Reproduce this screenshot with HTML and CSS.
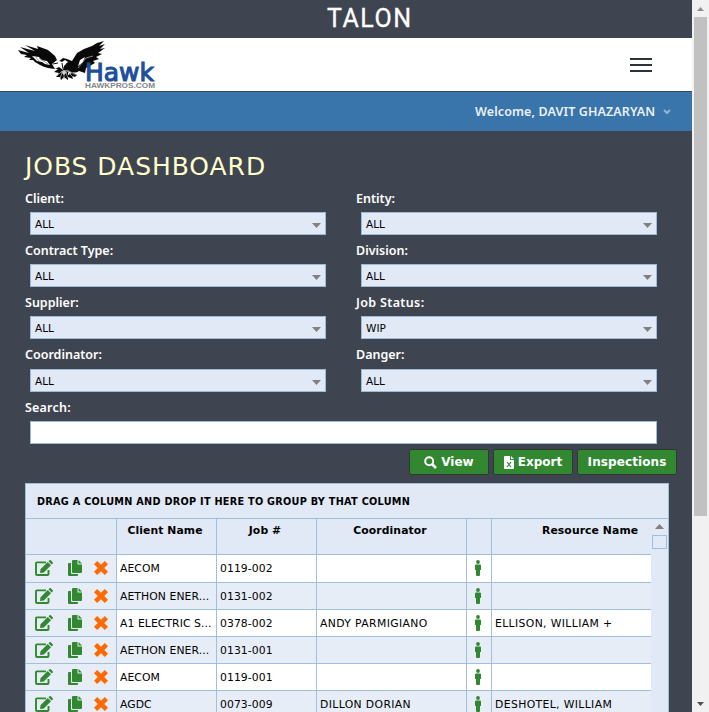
FILE: index.html
```html
<!DOCTYPE html>
<html lang="en">
<head>
<meta charset="utf-8">
<title>Talon - Jobs Dashboard</title>
<link rel="stylesheet" href="styles.css">
</head>
<body>
<svg class="defs" aria-hidden="true">
  <symbol id="edit" viewBox="0 0 18 16"><path d="M11 2.400H2Q1 2.400 1 3.400V14Q1 15 2 15H12.500Q13.500 15 13.500 14V10" fill="none" stroke="#318831" stroke-width="1.900"/><path d="M5.500 9.200 12.700 2 16 5.300 8.800 12.500 5 13ZM13.500 1.300 14.500.3Q15.200-.2 15.800.3L17.700 2.200Q18.200 2.800 17.700 3.500L16.700 4.500Z" fill="#318831"/></symbol>
  <symbol id="copy" viewBox="0 0 14 16"><path d="M4 1Q4 0 5 0H9.500V4.500H14V12Q14 13 13 13H5Q4 13 4 12ZM10.500 0 14 3.500H10.500ZM0 4Q0 3 1 3H3V13Q3 14 4 14H10V15Q10 16 9 16H1Q0 16 0 15Z" fill="#318831"/></symbol>
  <symbol id="remove" viewBox="0 0 14 14"><path d="M3.200 0 7 3.800 10.800 0 14 3.200 10.200 7 14 10.800 10.800 14 7 10.200 3.200 14 0 10.800 3.800 7 0 3.200Z" fill="#ff6a00"/></symbol>
  <symbol id="person" viewBox="0 0 6 16"><circle cx="3" cy="2" r="1.900" fill="#318831"/><path d="M1 4.500H5Q6 4.500 6 5.500V10H5V15Q5 16 4 16H2Q1 16 1 15V10H0V5.500Q0 4.500 1 4.500Z" fill="#318831"/></symbol>
</svg>
<div class="page">
  <header class="brand"><svg width="84" height="24"><text x="0" y="18" textLength="84">TALON</text></svg></header>
  <div class="masthead">
    <svg class="logo" width="140" height="50" viewBox="0 0 140 50">
      <path d="M0 10 11 13 2 7 17 11 7 5 20 9 19 6 30 10 37 16 40 22 45 18 49 19 54 21 59 13 66 9 74 6 79 3 86 1 81 6 87 4 82 9 87 8 80 13 84 14 78 17 81 19 75 21 77 23 68 28 67 33 61 31Q57 34 52 31L59 35 57 37 54 36 55 39 50 37 50 40 46 37 43 40 42 37 38 37 41 33 36 32 40 29Q29 29 22 25L17 22 15 20 11 20 13 18 6 17 9 15 3 14Z" fill="#090909"/>
      <path d="M34 24 39 20 44 22 47 20 50 22 46 26 45 30 41 27 37 29ZM14 16 21 17 23 20 29 21 32 25 27 24 24 22 19 21ZM62 20 67 17 65 22 60 26ZM43 32 46 30 49 32 46 35ZM50 31 54 33 50 35Z" fill="#fff"/>
      <path d="m39 36 5-5M42 38l3-7M46 39v-9M50 38l-3-8M55 37l-7-7M58 35l-9-5M60 28l8-10 7-2M21 18l9 6M17 16l4 5" fill="none" stroke="#999" stroke-width=".9"/>
      <path d="m35 24 5-1M44 23l1 6M49 23l-2 6" fill="none" stroke="#111"/>
      <text class="hawk" x="67" y="40.500" textLength="69" lengthAdjust="spacingAndGlyphs">Hawk</text>
      <text class="site" x="67" y="47.800" textLength="70" lengthAdjust="spacingAndGlyphs">HAWKPROS.COM</text>
    </svg>
    <div class="menu"><i></i><i></i><i></i></div>
  </div>
  <div class="welcome"><span>Welcome, DAVIT GHAZARYAN</span><svg width="8" height="6"><path d="m1 1 3 3 3-3" fill="none" stroke="#90b6d5" stroke-width="2"/></svg></div>
  <main>
    <h1>JOBS DASHBOARD</h1>
    <div class="filters">
      <div class="field"><label>Client:</label><div class="select">ALL</div></div>
      <div class="field"><label>Entity:</label><div class="select">ALL</div></div>
      <div class="field"><label>Contract Type:</label><div class="select">ALL</div></div>
      <div class="field"><label>Division:</label><div class="select">ALL</div></div>
      <div class="field"><label>Supplier:</label><div class="select">ALL</div></div>
      <div class="field"><label class="js">Job Status:</label><div class="select">WIP</div></div>
      <div class="field tall"><label>Coordinator:</label><div class="select">ALL</div></div>
      <div class="field tall"><label>Danger:</label><div class="select">ALL</div></div>
      <div class="field search"><label>Search:</label><div class="input"></div></div>
    </div>
    <div class="actions">
      <div class="btn view"><svg width="13" height="13"><circle cx="5.200" cy="5.200" r="4" fill="none" stroke="#fff" stroke-width="2"/><path d="m8 8 4 4" stroke="#fff" stroke-width="2.500"/></svg><span>View</span></div>
      <div class="btn export"><svg width="10" height="13"><path d="M1 0H6V4H10V12Q10 13 9 13H1Q0 13 0 12V1Q0 0 1 0ZM7 0 10 3H7Z" fill="#fff"/><path d="m3 6 4 5M7 6l-4 5" stroke="#318831" stroke-width="1.200"/></svg><span>Export</span></div>
      <div class="btn inspect"><span>Inspections</span></div>
    </div>
    <section class="grid">
      <div class="group"><span>DRAG A COLUMN AND DROP IT HERE TO GROUP BY THAT COLUMN</span></div>
      <div class="body">
        <div class="table">
          <div class="row head"><div></div><div class="cn">Client Name</div><div class="jn">Job #</div><div class="co">Coordinator</div><div></div><div class="res">Resource Name</div></div>
          <div class="row first"><div class="icons"><svg class="e"><use href="#edit"/></svg><svg class="c"><use href="#copy"/></svg><svg class="x"><use href="#remove"/></svg></div><div>AECOM</div><div>0119-002</div><div></div><div class="who"><svg><use href="#person"/></svg></div><div></div></div>
          <div class="row alt"><div class="icons"><svg class="e"><use href="#edit"/></svg><svg class="c"><use href="#copy"/></svg><svg class="x"><use href="#remove"/></svg></div><div>AETHON ENER...</div><div>0131-002</div><div></div><div class="who"><svg><use href="#person"/></svg></div><div></div></div>
          <div class="row"><div class="icons"><svg class="e"><use href="#edit"/></svg><svg class="c"><use href="#copy"/></svg><svg class="x"><use href="#remove"/></svg></div><div>A1 ELECTRIC S...</div><div>0378-002</div><div class="name">ANDY PARMIGIANO</div><div class="who"><svg><use href="#person"/></svg></div><div class="name">ELLISON, WILLIAM +</div></div>
          <div class="row alt"><div class="icons"><svg class="e"><use href="#edit"/></svg><svg class="c"><use href="#copy"/></svg><svg class="x"><use href="#remove"/></svg></div><div>AETHON ENER...</div><div>0131-001</div><div></div><div class="who"><svg><use href="#person"/></svg></div><div></div></div>
          <div class="row"><div class="icons"><svg class="e"><use href="#edit"/></svg><svg class="c"><use href="#copy"/></svg><svg class="x"><use href="#remove"/></svg></div><div>AECOM</div><div>0119-001</div><div></div><div class="who"><svg><use href="#person"/></svg></div><div></div></div>
          <div class="row alt"><div class="icons"><svg class="e"><use href="#edit"/></svg><svg class="c"><use href="#copy"/></svg><svg class="x"><use href="#remove"/></svg></div><div>AGDC</div><div>0073-009</div><div class="name">DILLON DORIAN</div><div class="who"><svg><use href="#person"/></svg></div><div class="name">DESHOTEL, WILLIAM</div></div>
        </div>
        <div class="gridbar"><svg width="9" height="5"><path d="M0 5 4.500 0 9 5Z" fill="#808080"/></svg><i></i></div>
      </div>
    </section>
  </main>
</div>
<aside class="scrollbar"><svg width="7" height="4"><path d="M0 4 3.500 0 7 4Z" fill="#8f8f8f"/></svg><i></i><svg width="7" height="4"><path d="M0 0H7L3.500 4Z" fill="#505050"/></svg></aside>
</body>
</html>
```

FILE: styles.css
```css
* { box-sizing: border-box; }
body { margin: 0; width: 709px; height: 712px; overflow: hidden; display: flex; background: #3f4550; font-family: "DejaVu Sans", Verdana, sans-serif; font-size: 11px; color: #000; }
svg { display: block; flex: none; overflow: visible; }
.defs { position: absolute; width: 0; height: 0; }
.page { width: 692px; height: 712px; overflow: hidden; }
.brand { height: 38px; padding: 9px 0 0 327px; }
.brand text { font: 400 25px Roboto, sans-serif; fill: #fff; stroke: #fff; stroke-width: .3px; }
.masthead { height: 53px; background: #fff; display: flex; justify-content: space-between; padding: 2px 40px 0 18px; }
.hawk { font: 400 25px "DejaVu Sans", sans-serif; fill: #1d4f9c; stroke: #1d4f9c; stroke-width: 1.1px; }
.site { font: bold 8px "Liberation Sans", sans-serif; fill: #858585; }
.menu { width: 22px; padding-top: 18px; display: grid; grid-auto-rows: 2px; gap: 4px; }
.menu i { background: #29323d; }
.welcome { height: 40px; border-top: 1px solid #3b4758; background: #3974aa; display: flex; align-items: center; padding-left: 475px; gap: 8px; color: #e9f1f8; font: 600 12.500px "Noto Sans", sans-serif; letter-spacing: .1px; }
.welcome span { width: 180px; white-space: nowrap; }
main { padding: 22px 0 0 25px; }
h1 { margin: 0; height: 36px; font-size: 25px; line-height: 28px; font-weight: 400; color: #ffffcc; letter-spacing: .95px; white-space: nowrap; }
.filters { display: grid; grid-template-columns: 331px 331px; }
.field { height: 52px; }
.field.tall { height: 53px; }
.field label { display: block; height: 23px; font: 600 12.500px/19px "Noto Sans", sans-serif; color: #fff; }
.field .js { letter-spacing: .35px; }
.field.tall label { height: 24px; }
.field.search label { letter-spacing: .2px; }
.select, .input { width: 296px; height: 23px; margin-left: 5px; border: 1px solid #9ebbd6; background: #e1e8f6; line-height: 22px; padding: 0 4px; display: flex; justify-content: space-between; font-size: 10.500px; }
.select::after { content: ""; width: 9px; height: 5px; margin-top: 10px; background: #808080; clip-path: polygon(0 0, 100% 0, 50% 100%); }
.search { grid-column: 1 / 3; height: 51px; }
.input { width: 627px; background: #fff; }
.actions { display: flex; gap: 4px; padding-left: 384px; }
.btn { height: 26px; border: 1px solid #303832; border-radius: 2px; background: #318831; color: #fff; display: flex; align-items: center; justify-content: center; gap: 4px; font-weight: 700; font-size: 12px; }
.view { width: 80px; }
.export { width: 80px; }
.inspect { width: 100px; letter-spacing: .1px; }
.grid { margin-top: 8px; width: 644px; border: 1px solid #a2bfd9; background: #e1e8f6; }
.group { height: 35px; border-bottom: 1px solid #a2bfd9; padding-left: 11px; font: 700 9.700px/35px "DejaVu Sans", sans-serif; letter-spacing: .28px; white-space: nowrap; }
.body { display: flex; }
.table { width: 625px; overflow: hidden; }
.row { display: grid; grid-template-columns: 91px 100px 100px 150px 25px 159px; height: 27px; background: #fff; }
.row.first { height: 28px; }
.row > div { border-right: 1px solid #a2bfd9; border-bottom: 1px solid #a2bfd9; padding-left: 3px; line-height: 27px; white-space: nowrap; overflow: hidden; font-size: 10.800px; letter-spacing: .08px; }
.row > .name { letter-spacing: .38px; }
.row > div:last-child { border-right: 0; }
.row.head { height: 36px; background: #e1e8f6; }
.row.head > div { font-weight: 700; line-height: 23px; padding: 0 3px 0 0; text-align: center; letter-spacing: .1px; }
.row.head > .res { text-align: left; padding-left: 50px; }
.row.alt, .row .icons { background: #e7edf7; }
.row .icons { display: flex; align-items: center; padding-left: 9px; }
.icons svg { position: relative; top: -.5px; }
.e { width: 18px; height: 16px; }
.c { width: 14px; height: 16px; margin-left: 15px; }
.x { width: 14px; height: 14px; margin-left: 12px; }
.row > .who { padding: 5px 0 0 8px; }
.who svg { width: 6px; height: 16px; }
.gridbar { width: 17px; padding: 5px 1px 0 0; display: flex; flex-direction: column; align-items: center; }
.gridbar i { width: 15px; height: 14px; margin-top: 6px; border: 1px solid #a2bfd9; }
.scrollbar { width: 17px; height: 712px; background: #f1f1f1; display: flex; flex-direction: column; align-items: center; padding: 7px 0 6px; }
.scrollbar i { width: 13px; height: 499px; background: #c1c1c1; margin: 6px 0 auto; }
```
